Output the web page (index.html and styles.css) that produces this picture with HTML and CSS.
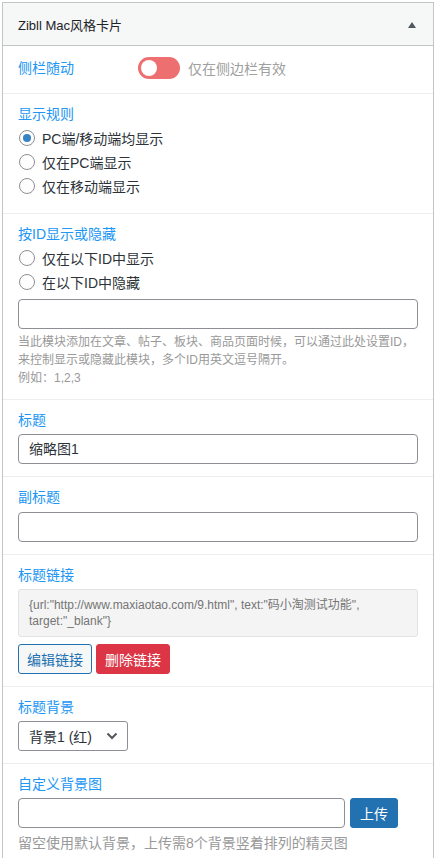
FILE: index.html
```html
<!DOCTYPE html>
<html lang="zh-CN">
<head>
<meta charset="utf-8">
<title>Zibll Mac风格卡片</title>
<link rel="stylesheet" href="styles.css">
</head>
<body>
<div class="widget">
  <div class="widget-top">
    <h3 class="widget-title">Zibll Mac风格卡片</h3>
    <span class="arrow"></span>
  </div>
  <div class="widget-inside">
    <div class="field row">
      <label class="label">侧栏随动</label>
      <span class="switch"><span class="knob"></span></span>
      <span class="switch-note">仅在侧边栏有效</span>
    </div>

    <div class="field">
      <div class="label">显示规则</div>
      <div class="radios pad3">
        <label class="radio"><span class="dot checked"></span>PC端/移动端均显示</label>
        <label class="radio"><span class="dot"></span>仅在PC端显示</label>
        <label class="radio"><span class="dot"></span>仅在移动端显示</label>
      </div>
    </div>

    <div class="field">
      <div class="label">按ID显示或隐藏</div>
      <div class="radios">
        <label class="radio"><span class="dot"></span>仅在以下ID中显示</label>
        <label class="radio"><span class="dot"></span>在以下ID中隐藏</label>
      </div>
      <div class="input mt5"></div>
      <p class="help">当此模块添加在文章、帖子、板块、商品页面时候，可以通过此处设置ID，来控制显示或隐藏此模块，多个ID用英文逗号隔开。<br>例如：1,2,3</p>
    </div>

    <div class="field">
      <div class="label">标题</div>
      <div class="input">缩略图1</div>
    </div>

    <div class="field">
      <div class="label">副标题</div>
      <div class="input mt5"></div>
    </div>

    <div class="field">
      <div class="label">标题链接</div>
      <div class="code">{url:"http://www.maxiaotao.com/9.html", text:"码小淘测试功能", target:"_blank"}</div>
      <div class="buttons">
        <span class="btn btn-edit">编辑链接</span>
        <span class="btn btn-del">删除链接</span>
      </div>
    </div>

    <div class="field">
      <div class="label">标题背景</div>
      <div class="select">
        <span>背景1 (红)</span>
        <svg class="chev" width="12" height="8" viewBox="0 0 12 8"><path d="M1.5 1.5 L6 6 L10.5 1.5" fill="none" stroke="#50575e" stroke-width="2"/></svg>
      </div>
    </div>

    <div class="field last">
      <div class="label">自定义背景图</div>
      <div class="upload-row">
        <div class="input grow"></div>
        <span class="btn btn-upload">上传</span>
      </div>
      <p class="help big">留空使用默认背景，上传需8个背景竖着排列的精灵图</p>
    </div>
  </div>
</div>
</body>
</html>
```

FILE: styles.css
```css
html, body {
  margin: 0;
  padding: 0;
  background: #fff;
}
body {
  font-family: "Liberation Sans", "Noto Sans CJK SC", Arial, sans-serif;
  font-size: 14px;
  color: #2c3338;
}
.widget {
  margin: 2px 4px 0 2px;
  border: 1px solid #c3c4c7;
  border-bottom: none;
  background: #fff;
}
.widget-top {
  height: 42px;
  background: #f6f7f7;
  border-bottom: 1px solid #c3c4c7;
  display: flex;
  align-items: center;
  justify-content: space-between;
  padding: 0 17px 0 15px;
}
.widget-title {
  margin: 0;
  font-size: 13px;
  font-weight: 400;
  color: #1d2327;
}
.arrow {
  width: 0;
  height: 0;
  border-left: 4.5px solid transparent;
  border-right: 4.5px solid transparent;
  border-bottom: 6px solid #50575e;
  margin-top: 1px;
}
.field {
  padding: 10px 15px 12px 15px;
  border-bottom: 1px solid #eeeeee;
}
.field.last {
  border-bottom: none;
}
.row {
  display: flex;
  align-items: center;
  height: 24px;
  padding-top: 10px;
  padding-bottom: 13px;
}
.label {
  display: block;
  color: #2196f3;
  line-height: 20px;
  margin-bottom: 4px;
}
.row .label {
  margin: 0;
  width: 120px;
}
.switch {
  position: relative;
  width: 42px;
  height: 22px;
  border-radius: 11px;
  background: #ee6f6f;
  display: inline-block;
}
.knob {
  position: absolute;
  left: 3px;
  top: 3px;
  width: 16px;
  height: 16px;
  border-radius: 50%;
  background: #fff;
}
.switch-note {
  margin-left: 8px;
  color: #a0a0a0;
}
.radios {
  margin-top: -2px;
}
.radios.pad3 {
  padding-bottom: 3px;
}
.radio {
  display: flex;
  align-items: center;
  height: 24px;
  color: #2c3338;
}
.dot {
  box-sizing: border-box;
  width: 16px;
  height: 16px;
  border: 1px solid #8c8f94;
  border-radius: 50%;
  margin: 0 7px 0 1px;
  display: inline-flex;
  align-items: center;
  justify-content: center;
  background: #fff;
}
.dot.checked::before {
  content: "";
  width: 8px;
  height: 8px;
  border-radius: 50%;
  background: #3582c4;
}
.input {
  box-sizing: border-box;
  height: 30px;
  border: 1px solid #8c8f94;
  border-radius: 4px;
  padding: 0 10px;
  line-height: 28px;
  color: #2c3338;
  background: #fff;
}
.mt5 {
  margin-top: 5px;
}
.help {
  margin: 4px 0 0;
  font-size: 12px;
  line-height: 18px;
  color: #999;
}
.help.big {
  font-size: 14px;
  margin-top: 6px;
  line-height: 18px;
}
.code {
  background: #f4f4f4;
  border: 1px solid #e3e3e3;
  border-radius: 3px;
  padding: 7px 10px;
  font-size: 12px;
  line-height: 16px;
  color: #757575;
}
.buttons {
  display: flex;
  gap: 4px;
  margin-top: 7px;
}
.btn {
  box-sizing: border-box;
  display: inline-flex;
  align-items: center;
  justify-content: center;
  height: 30px;
  padding: 0 8px;
  border-radius: 3px;
  font-size: 14px;
}
.btn-edit {
  border: 1px solid #2271b1;
  background: #f6f7f7;
  color: #2271b1;
}
.btn-del {
  border: 1px solid #dc3545;
  background: #dc3545;
  color: #fff;
}
.select {
  box-sizing: border-box;
  width: 110px;
  height: 30px;
  border: 1px solid #8c8f94;
  border-radius: 3px;
  display: flex;
  align-items: center;
  justify-content: space-between;
  padding: 0 9px 0 10px;
  color: #2c3338;
}
.chev {
  display: block;
}
.upload-row {
  display: flex;
  gap: 5px;
  width: 380px;
}
.grow {
  flex: 1;
}
.btn-upload {
  width: 48px;
  padding: 0;
  background: #2271b1;
  border: 1px solid #2271b1;
  color: #fff;
}
```
